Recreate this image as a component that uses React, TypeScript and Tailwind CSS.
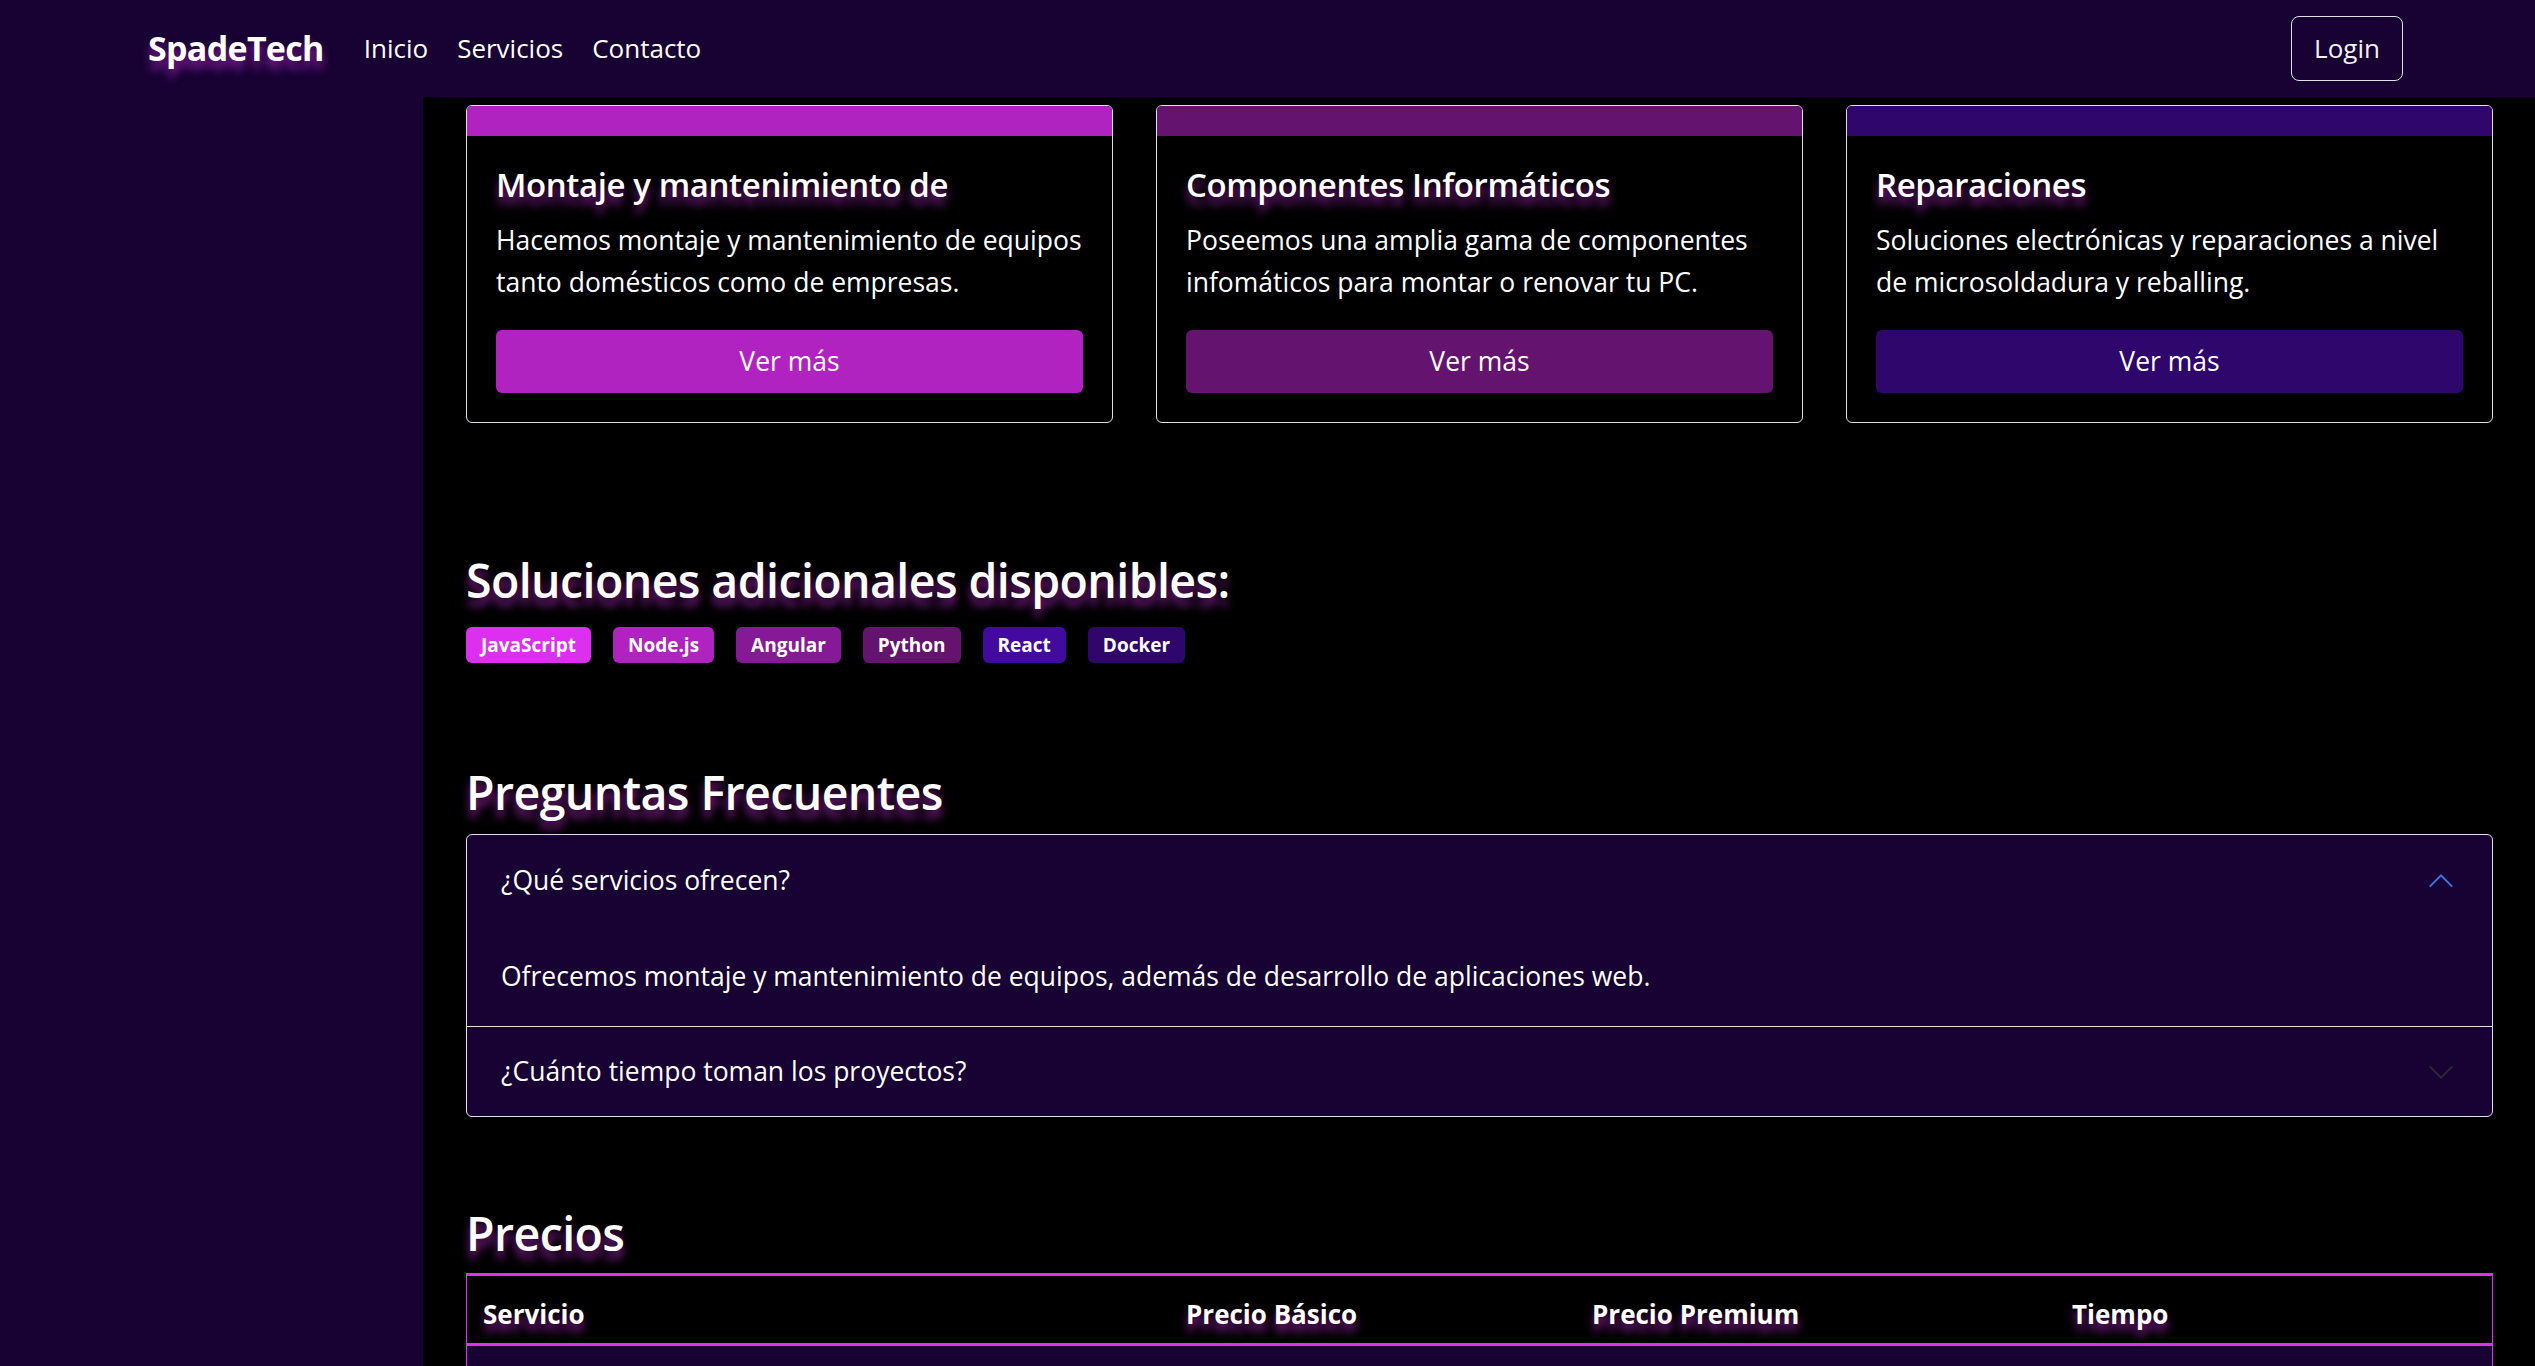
import React from "react";

const glow = "[text-shadow:0_8px_10px_rgba(170,40,190,0.75)]";

const cards = [
  {
    title: "Montaje y mantenimiento de",
    text: "Hacemos montaje y mantenimiento de equipos tanto domésticos como de empresas.",
    color: "bg-[#b023c0]",
  },
  {
    title: "Componentes Informáticos",
    text: "Poseemos una amplia gama de componentes infomáticos para montar o renovar tu PC.",
    color: "bg-[#64136e]",
  },
  {
    title: "Reparaciones",
    text: "Soluciones electrónicas y reparaciones a nivel de microsoldadura y reballing.",
    color: "bg-[#2e066c]",
  },
];

const badges = [
  { label: "JavaScript", color: "bg-[#dd2ff0]" },
  { label: "Node.js", color: "bg-[#b023c0]" },
  { label: "Angular", color: "bg-[#861a96]" },
  { label: "Python", color: "bg-[#64136e]" },
  { label: "React", color: "bg-[#420a9e]" },
  { label: "Docker", color: "bg-[#2e066c]" },
];

const precios = [
  ["Montaje de equipos", "50€", "80€", "2-3 días"],
  ["Mantenimiento", "30€", "60€", "1-2 días"],
  ["Reparaciones", "40€", "90€", "3-5 días"],
];

function Chevron({ up, color }: { up?: boolean; color: string }) {
  return (
    <svg width="30" height="30" viewBox="0 0 16 16" fill="none">
      <path
        d={up ? "M2 11L8 5L14 11" : "M2 5L8 11L14 5"}
        stroke={color}
        strokeWidth="1.1"
      />
    </svg>
  );
}

export default function App() {
  return (
    <div className="h-[1366px] w-full overflow-hidden flex flex-col bg-black text-white font-['Open_Sans','Noto_Sans',sans-serif]">
      <nav className="h-[97px] shrink-0 bg-[#170233] flex items-center pl-[148px] pr-[132px]">
        <span className={`text-[34px] font-bold tracking-[-0.7px] ${glow}`}>SpadeTech</span>
        <div className="flex gap-[29px] ml-[40px] text-[26px]">
          <a>Inicio</a>
          <a>Servicios</a>
          <a>Contacto</a>
        </div>
        <button className="ml-auto w-[112px] h-[65px] border border-[#dee2e6] rounded-[8px] text-[26px] text-[#f2f2f2]">
          Login
        </button>
      </nav>

      <div className="flex flex-1 min-h-0">
        <aside className="w-[423px] shrink-0 bg-[#170233]" />
        <main className="flex-1 min-w-0 pt-[8px] pl-[43px] pr-[42px] overflow-hidden">
          <div className="grid grid-cols-3 gap-[43px]">
            {cards.map((c) => (
              <div key={c.title} className="border border-[#dee2e6] rounded-[6px] overflow-hidden bg-black">
                <div className={`h-[30px] ${c.color}`} />
                <div className="p-[29px]">
                  <h5 className={`text-[33px] font-semibold tracking-[-0.4px] leading-[40px] mb-[14px] ${glow}`}>
                    {c.title}
                  </h5>
                  <p className="text-[26.5px] leading-[42px] mb-[27px]">{c.text}</p>
                  <button className={`w-full h-[63px] rounded-[6px] text-[26.5px] ${c.color}`}>Ver más</button>
                </div>
              </div>
            ))}
          </div>

          <h2 className={`mt-[128px] text-[46.5px] font-semibold tracking-[-0.6px] leading-[58px] ${glow}`}>
            Soluciones adicionales disponibles:
          </h2>
          <div className="flex gap-[22px] mt-[18px]">
            {badges.map((b) => (
              <span
                key={b.label}
                className={`h-[36px] px-[15px] flex items-center rounded-[6px] text-[19px] font-bold ${b.color}`}
              >
                {b.label}
              </span>
            ))}
          </div>

          <h2 className={`mt-[100px] mb-[13px] text-[46.5px] font-semibold tracking-[-0.6px] leading-[58px] ${glow}`}>
            Preguntas Frecuentes
          </h2>
          <div className="border border-[#dee2e6] rounded-[6px] bg-[#170233] overflow-hidden">
            <div className="h-[91px] flex items-center justify-between pl-[34px] pr-[36px] text-[26.5px]">
              <span>¿Qué servicios ofrecen?</span>
              <Chevron up color="#3d72e0" />
            </div>
            <div className="py-[29px] px-[34px] text-[26.5px] leading-[42px]">
              Ofrecemos montaje y mantenimiento de equipos, además de desarrollo de aplicaciones web.
            </div>
            <div className="border-t border-[#dee2e6] h-[90px] flex items-center justify-between pl-[34px] pr-[36px] text-[26.5px]">
              <span>¿Cuánto tiempo toman los proyectos?</span>
              <Chevron color="#2a2a30" />
            </div>
          </div>

          <h2 className={`mt-[87px] mb-[11px] text-[46.5px] font-semibold tracking-[-0.6px] leading-[58px] ${glow}`}>
            Precios
          </h2>
          <div className="border-x border-t-[3px] border-[#e02ff0]">
            <div className="grid grid-cols-[703px_406px_480px_1fr] h-[70px] pt-[10px] items-center border-b-[3px] border-[#e02ff0] text-[26px] font-bold bg-black">
              {["Servicio", "Precio Básico", "Precio Premium", "Tiempo"].map((h) => (
                <span key={h} className={`px-[16px] ${glow}`}>
                  {h}
                </span>
              ))}
            </div>
            {precios.map((r) => (
              <div
                key={r[0]}
                className="grid grid-cols-[703px_406px_480px_1fr] h-[70px] items-center border-b border-[#e02ff0] text-[26px] bg-[#170233]"
              >
                {r.map((v, i) => (
                  <span key={i} className="px-[16px]">
                    {v}
                  </span>
                ))}
              </div>
            ))}
          </div>
        </main>
      </div>
    </div>
  );
}
